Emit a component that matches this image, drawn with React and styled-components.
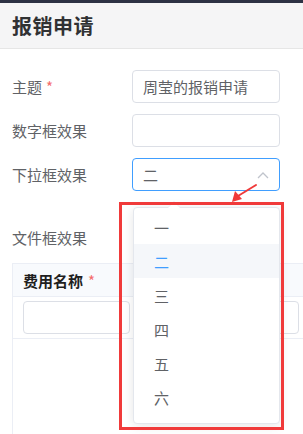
import React from "react";
import styled, { createGlobalStyle } from "styled-components";

const GlobalStyle = createGlobalStyle`
    html, body {
        margin: 0;
        padding: 0;
        background: #fff;
        overflow: hidden;
    }
    body {
        font-family: "Noto Sans CJK SC", "Noto Sans", sans-serif;
        color: #606266;
    }
`;

const Page = styled.div`
    position: relative;
    width: 303px;
    height: 434px;
    overflow: hidden;
    border-top: 3px solid #2d3244;
    box-sizing: border-box;
`;

const Header = styled.header`
    height: 45px;
    background: #f5f5f6;
    border-bottom: 1px solid #e6e6e6;
    display: flex;
    align-items: center;
    padding: 0 12px;

    h2 {
        margin: 0;
        font-size: 20px;
        font-weight: 700;
        color: #303133;
        letter-spacing: 0.5px;
    }
`;

const Form = styled.div`
    padding: 21px 12px 0;
    display: flex;
    flex-direction: column;
    gap: 11px;
`;

const Row = styled.div`
    display: flex;
    align-items: center;
    height: 33px;
    margin-top: ${(p) => p.$offset || 0}px;
`;

const Label = styled.label`
    width: 120px;
    flex-shrink: 0;
    font-size: 15px;
    color: #606266;

    em {
        color: #f56c6c;
        font-style: normal;
        margin-left: 4px;
    }
`;

const Input = styled.div`
    box-sizing: border-box;
    width: ${(p) => p.$width || 148}px;
    height: 33px;
    border: 1px solid ${(p) => (p.$focus ? "#409eff" : "#dcdfe6")};
    border-radius: 4px;
    background: #fff;
    display: flex;
    align-items: center;
    justify-content: space-between;
    padding: 0 10px;
    font-size: 15px;
    color: #606266;
`;

const Table = styled.div`
    margin: 9px 0 0 12px;
    width: 520px;
    height: 200px;
    border-left: 1px solid #ebeef5;
    border-top: 1px solid #ebeef5;
`;

const HeadRow = styled.div`
    display: flex;
    height: 32px;
    background: #f8fafd;
    border-bottom: 1px solid #ebeef5;
`;

const HeadCell = styled.div`
    width: 128px;
    padding-left: 10px;
    display: flex;
    align-items: center;
    font-size: 15px;
    font-weight: 700;
    color: #1f1f1f;

    em {
        color: #f56c6c;
        font-style: normal;
        margin-left: 5px;
        font-weight: 400;
    }
`;

const BodyRow = styled.div`
    display: flex;
    gap: 21px;
    padding: 4px 10px;
    border-bottom: 1px solid #ebeef5;
`;

const Dropdown = styled.ul`
    position: absolute;
    left: 133px;
    top: 204px;
    width: 147px;
    margin: 0;
    padding: 2px 0 9px;
    list-style: none;
    background: #fff;
    border: 1px solid #e4e7ed;
    border-radius: 4px;
    box-shadow: 0 2px 12px rgba(0, 0, 0, 0.1);
    box-sizing: border-box;

    &::before {
        content: "";
        position: absolute;
        top: -6px;
        left: 34px;
        border: 6px solid transparent;
        border-top: 0;
        border-bottom-color: #fff;
        filter: drop-shadow(0 -1px 0 #ebeef5);
    }
`;

const Option = styled.li`
    height: 34px;
    display: flex;
    align-items: center;
    padding-left: 20px;
    font-size: 15px;
    color: ${(p) => (p.$active ? "#409eff" : "#606266")};
    background: ${(p) => (p.$active ? "#f5f7fa" : "transparent")};
`;

const Highlight = styled.div`
    position: absolute;
    left: 119px;
    top: 199px;
    width: 165px;
    height: 228px;
    border: 3px solid #f03a3a;
    box-sizing: border-box;
`;

const Pointer = styled.svg`
    position: absolute;
    left: 226px;
    top: 178px;
`;

const Chevron = () => (
    <svg width="12" height="8" viewBox="0 0 12 8">
        <path d="M1 7 L6 2 L11 7" fill="none" stroke="#c0c4cc" strokeWidth="1.3" />
    </svg>
);

const options = ["一", "二", "三", "四", "五", "六"];

export default function App() {
    return (
        <Page>
            <GlobalStyle />
            <Header>
                <h2>报销申请</h2>
            </Header>
            <Form>
                <Row>
                    <Label>
                        主题<em>*</em>
                    </Label>
                    <Input>周莹的报销申请</Input>
                </Row>
                <Row>
                    <Label>数字框效果</Label>
                    <Input />
                </Row>
                <Row>
                    <Label>下拉框效果</Label>
                    <Input $focus>
                        <span>二</span>
                        <Chevron />
                    </Input>
                </Row>
                <Row $offset={19}>
                    <Label>文件框效果</Label>
                </Row>
            </Form>
            <Table>
                <HeadRow>
                    <HeadCell>
                        费用名称<em>*</em>
                    </HeadCell>
                    <HeadCell />
                </HeadRow>
                <BodyRow>
                    <Input $width={107} />
                    <Input $width={148} />
                </BodyRow>
            </Table>
            <Dropdown>
                {options.map((o) => (
                    <Option key={o} $active={o === "二"}>
                        {o}
                    </Option>
                ))}
            </Dropdown>
            <Highlight />
            <Pointer width="34" height="24" viewBox="0 0 34 24">
                <path d="M30 4 L12 15" stroke="#f03a3a" strokeWidth="2" strokeLinecap="round" />
                <path d="M6 21 L9 10 L16 18 Z" fill="#f03a3a" />
            </Pointer>
        </Page>
    );
}
